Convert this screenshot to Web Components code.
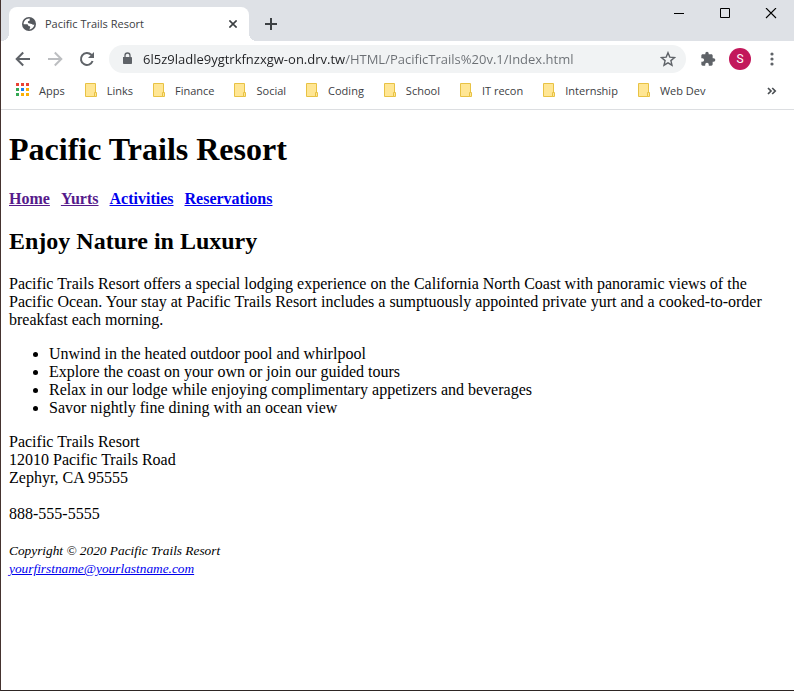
<!DOCTYPE html>
<html lang="en">
<head>
<meta charset="utf-8">
<title>Pacific Trails Resort</title>
<style>
  html, body { margin: 0; height: 100%; }
  body { font-family: "Open Sans", "Noto Sans", sans-serif; font-size: 11px; color: #3c4043; background: #fff; }
</style>
</head>
<body>
<browser-window>
  <tab-strip slot="tabs">
    <browser-tab>Pacific Trails Resort</browser-tab>
  </tab-strip>
  <nav-toolbar slot="toolbar" url="6l5z9ladle9ygtrkfnzxgw-on.drv.tw/HTML/PacificTrails%20v.1/Index.html"></nav-toolbar>
  <bookmark-bar slot="bookmarks">
    <bookmark-item kind="apps">Apps</bookmark-item>
    <bookmark-item>Links</bookmark-item>
    <bookmark-item>Finance</bookmark-item>
    <bookmark-item>Social</bookmark-item>
    <bookmark-item>Coding</bookmark-item>
    <bookmark-item>School</bookmark-item>
    <bookmark-item>IT recon</bookmark-item>
    <bookmark-item>Internship</bookmark-item>
    <bookmark-item>Web Dev</bookmark-item>
  </bookmark-bar>
  <resort-page></resort-page>
</browser-window>

<script>
const BUTTON = `
  button { border: 0; padding: 0; margin: 0; background: none; color: inherit; font: inherit;
           display: grid; place-items: center; cursor: pointer; }
  svg { display: block; }
`;

function define(name, html, setup) {
  const template = document.createElement('template');
  template.innerHTML = html;
  customElements.define(name, class extends HTMLElement {
    constructor() {
      super();
      this.attachShadow({ mode: 'open' }).append(template.content.cloneNode(true));
    }
    connectedCallback() { if (setup) setup(this, this.shadowRoot); }
  });
}

define('browser-window', `
  <style>
    :host { display: flex; flex-direction: column; min-height: 100vh; box-sizing: border-box;
            border-left: 1px solid #45332f; border-bottom: 1px solid #2e2624; background: #fff; }
    main { flex: 1; }
  </style>
  <slot name="tabs"></slot>
  <slot name="toolbar"></slot>
  <slot name="bookmarks"></slot>
  <main><slot></slot></main>
`);

define('tab-strip', `
  <style>${BUTTON}
    :host { display: flex; align-items: flex-end; height: 41px; background: #dee1e6; padding-left: 8px; }
    .add { width: 28px; height: 34px; margin-left: 8px; color: #3c4043; }
    .controls { display: flex; align-self: flex-start; margin-left: auto; color: #000; }
    .controls button { width: 46px; height: 28px; }
  </style>
  <slot></slot>
  <button class="add" aria-label="New tab">
    <svg width="12" height="12" viewBox="0 0 12 12" stroke="currentColor" stroke-width="2"><path d="M6 0v12M0 6h12"/></svg>
  </button>
  <div class="controls">
    <button aria-label="Minimize"><svg width="12" height="12" viewBox="0 0 12 12" stroke="currentColor"><path d="M1 5.500h10"/></svg></button>
    <button aria-label="Maximize"><svg width="12" height="12" viewBox="0 0 12 12" stroke="currentColor" fill="none"><path d="M1.500.5h9v9h-9z"/></svg></button>
    <button aria-label="Close"><svg width="12" height="12" viewBox="0 0 12 12" stroke="currentColor" stroke-width="1.100"><path d="M1 0l10 10M11 0L1 10"/></svg></button>
  </div>
`);

define('browser-tab', `
  <style>${BUTTON}
    :host { display: flex; align-items: center; flex: 0 1 240px; box-sizing: border-box; height: 34px;
            padding: 0 9px 0 12px; background: #fff; border-radius: 8px 8px 0 0; position: relative; }
    :host::before, :host::after { content: ""; position: absolute; bottom: 0; width: 8px; height: 8px; }
    :host::before { right: 100%; background: radial-gradient(circle at 0 0, #dee1e6 8px, #fff 8px); }
    :host::after { left: 100%; background: radial-gradient(circle at 100% 0, #dee1e6 8px, #fff 8px); }
    .title { flex: 1; margin-left: 8px; white-space: nowrap; overflow: hidden; line-height: 16px; }
    button { width: 14px; height: 14px; color: #3c4043; }
  </style>
  <svg width="16" height="16" viewBox="0 0 16 16">
    <circle cx="8" cy="8" r="7" fill="#54585d"/>
    <path fill="#fff" d="M8.800 2.600C6.800 2.300 4.200 3.500 3.200 5.600 2.500 7 2.500 7.500 2.700 8.200L5.900 8.300C7.200 8.500 7.400 9.300 7.300 10.100L8.800 10.300C9.500 10.600 9.400 12 8.300 13.400 10.700 13.300 13 11.300 13.400 8.400 12.300 9.300 11.400 8.700 10.700 8 9.600 7.400 7.600 7.800 7 6.700 6.500 5.500 7.400 4.900 8.500 4.800 9.100 4.700 8.300 3.500 8.800 2.600z"/>
  </svg>
  <span class="title"><slot></slot></span>
  <button aria-label="Close tab"><svg width="8" height="8" viewBox="0 0 8 8" stroke="currentColor" stroke-width="1.600"><path d="M.4.4l7.200 7.200M7.600.4L.4 7.600"/></svg></button>
`);

define('nav-toolbar', `
  <style>${BUTTON}
    :host { display: flex; align-items: center; height: 36px; padding: 0 8px 0 8px; color: #5f6368; }
    .nav { width: 28px; height: 28px; margin-right: 4px; }
    .off { color: #bcbec1; }
    .box { flex: 1; min-width: 0; display: flex; align-items: center; height: 28px; border-radius: 14px;
           background: #f1f3f4; padding: 0 10px 0 12px; margin: 0 8px 0 4px; }
    input { flex: 1; min-width: 0; height: 28px; border: 0; outline: 0; padding: 0; margin: 0 8px 0 10px;
            font-family: inherit; font-size: 13px; color: #202124;
            background: linear-gradient(90deg, #202124 var(--host-width), #6b6f74 var(--host-width));
            -webkit-background-clip: text; background-clip: text; -webkit-text-fill-color: transparent; }
    .ext { width: 28px; height: 28px; }
    .avatar { width: 22px; height: 22px; border-radius: 50%; background: #c2185b; color: #fff; margin: 0 7px;
              font-family: Roboto, sans-serif; font-size: 12px; }
  </style>
  <button class="nav" aria-label="Back"><svg width="16" height="16" viewBox="0 0 16 16" fill="none" stroke="currentColor" stroke-width="2"><path d="M15 8H2M8.200 1.500L1.700 8l6.500 6.500"/></svg></button>
  <button class="nav off" aria-label="Forward" disabled><svg width="16" height="16" viewBox="0 0 16 16" fill="none" stroke="currentColor" stroke-width="2"><path d="M1 8h13M7.800 1.500L14.300 8l-6.500 6.500"/></svg></button>
  <button class="nav" aria-label="Reload"><svg width="16" height="16" viewBox="0 0 16 16"><path fill="none" stroke="currentColor" stroke-width="2" d="M13.600 10A6 6 0 1 1 12.300 3.800L13.500 5"/><path fill="currentColor" d="M15 1v6H9z"/></svg></button>
  <div class="box">
    <svg width="12" height="14" viewBox="0 0 12 14"><path fill="#5f6368" d="M2 5h8.200q.8 0 .8.800v5.400q0 .8-.8.800H2.800q-.8 0-.8-.8z"/><path d="M4 5.500V3.500a2.500 2.500 0 0 1 5 0v2" fill="none" stroke="#5f6368" stroke-width="1.300"/></svg>
    <input type="text" aria-label="Address" spellcheck="false">
    <button aria-label="Bookmark this tab"><svg width="16" height="16" viewBox="0 0 16 16" fill="none" stroke="currentColor" stroke-width="1.400"><path d="M8 1.700l1.800 4.400 4.700.4-3.600 3.100 1.100 4.600L8 11.800l-4 2.400 1.100-4.600L1.500 6.500l4.700-.4z"/></svg></button>
  </div>
  <button class="ext" aria-label="Extensions"><svg width="16" height="16" viewBox="0 0 24 24" fill="currentColor"><path d="M20.500 11H19V7c0-1.100-.9-2-2-2h-4V3.500a2.500 2.500 0 0 0-5 0V5H4c-1.100 0-2 .9-2 2v3.800h1.500a2.700 2.700 0 0 1 0 5.400H2V20c0 1.100.9 2 2 2h3.800v-1.500a2.700 2.700 0 0 1 5.400 0V22H17c1.100 0 2-.9 2-2v-4h1.500a2.500 2.500 0 0 0 0-5z"/></svg></button>
  <button class="avatar" aria-label="Profile">S</button>
  <button class="ext" aria-label="Menu"><svg width="4" height="14" viewBox="0 0 4 14" fill="currentColor"><circle cx="2" cy="2" r="1.600"/><circle cx="2" cy="7" r="1.600"/><circle cx="2" cy="12" r="1.600"/></svg></button>
`, (host, root) => {
  const input = root.querySelector('input');
  const url = host.getAttribute('url');
  input.value = url;
  const style = getComputedStyle(input);
  const ctx = document.createElement('canvas').getContext('2d');
  ctx.font = `${style.fontSize} ${style.fontFamily}`;
  input.style.setProperty('--host-width', Math.round(ctx.measureText(url.slice(0, url.indexOf('/'))).width) + 'px');
});

define('bookmark-bar', `
  <style>${BUTTON}
    :host { display: flex; align-items: center; height: 32px; padding: 0 12px 0 14px; border-bottom: 1px solid #dcdee1; }
    .items { display: flex; flex: 1; gap: 20px; min-width: 0; overflow: hidden; padding-bottom: 6px; }
    .more { width: 20px; height: 20px; margin-bottom: 4px; color: #4a4e52; }
  </style>
  <div class="items"><slot></slot></div>
  <button class="more" aria-label="More bookmarks"><svg width="10" height="8" viewBox="0 0 10 8" fill="none" stroke="currentColor" stroke-width="1.700"><path d="M1 1L4 4 1 7M5.200 1l3 3-3 3"/></svg></button>
`);

define('bookmark-item', `
  <style>${BUTTON}
    :host { display: block; flex: none; }
    button { display: flex; align-items: center; gap: 10px; height: 20px; white-space: nowrap; }
    .apps { display: none; }
    :host([kind="apps"]) .apps { display: block; }
    :host([kind="apps"]) .folder { display: none; }
  </style>
  <button>
    <svg class="folder" width="12" height="14" viewBox="0 0 12 14" fill="#ffe694" stroke="#e8c244"><path d="M.5.5h10v13H.5z"/><path d="M9.500 9.500h2v4h-2z"/></svg>
    <svg class="apps" width="14" height="14" viewBox="0 0 14 14">
      <path fill="#ea4335" d="M1 0h3v3H1zM6 0h3v3H6zM11 0h3v3h-3z"/>
      <path fill="#34a853" d="M1 5h3v3H1zM1 10h3v3H1z"/><path fill="#1a83f0" d="M6 5h3v3H6z"/>
      <path fill="#fbb005" d="M11 5h3v3h-3zM6 10h3v3H6zM11 10h3v3h-3z"/>
    </svg>
    <span><slot></slot></span>
  </button>
`);

define('resort-page', `
  <style>
    :host { display: block; padding: 21px 8px 8px; color: #000;
            font-family: "Liberation Serif", "Times New Roman", serif; font-size: 16px; line-height: 18px; }
    h1 { margin: 0; font-size: 32px; line-height: 37px; }
    nav { display: flex; gap: 11px; margin-top: 22px; font-weight: bold; }
    a { color: #0000ee; }
    a.seen { color: #551a8b; }
    h2 { margin: 20px 0; font-size: 24px; line-height: 27px; }
    p { margin: 0; }
    ul { margin: 16px 0; padding-left: 40px; }
    address { font-style: normal; }
    .phone { margin-top: 18px; }
    footer { margin-top: 19px; font-size: smaller; font-style: italic; }
  </style>
  <h1>Pacific Trails Resort</h1>
  <nav>
    <a class="seen" href="#home">Home</a>
    <a class="seen" href="#yurts">Yurts</a>
    <a href="#activities">Activities</a>
    <a href="#reservations">Reservations</a>
  </nav>
  <h2>Enjoy Nature in Luxury</h2>
  <p>Pacific Trails Resort offers a special lodging experience on the California North Coast with panoramic views of the Pacific Ocean. Your stay at Pacific Trails Resort includes a sumptuously appointed private yurt and a cooked-to-order breakfast each morning.</p>
  <ul>
    <li>Unwind in the heated outdoor pool and whirlpool</li>
    <li>Explore the coast on your own or join our guided tours</li>
    <li>Relax in our lodge while enjoying complimentary appetizers and beverages</li>
    <li>Savor nightly fine dining with an ocean view</li>
  </ul>
  <address>
    Pacific Trails Resort<br>
    12010 Pacific Trails Road<br>
    Zephyr, CA 95555
    <p class="phone">888-555-5555</p>
  </address>
  <footer>
    Copyright © 2020 Pacific Trails Resort<br>
    <a href="mailto:yourfirstname@yourlastname.com">yourfirstname@yourlastname.com</a>
  </footer>
`);
</script>
</body>
</html>
